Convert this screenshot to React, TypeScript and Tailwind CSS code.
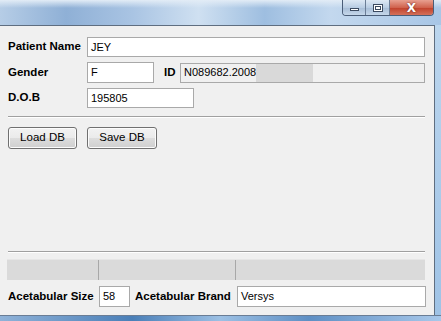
import React from "react";

const font = { fontFamily: "'Liberation Sans', Arial, sans-serif" };

function Input({ w, value, gray, h = 20 }: { w: number; value: string; gray?: boolean; h?: number }) {
  return (
    <div
      className={`flex shrink-0 items-center whitespace-nowrap border border-[#a9a9a9] pl-[3px] text-[11px] text-black ${gray ? "bg-[#f0f0f0]" : "bg-white"}`}
      style={{ width: w, height: h }}
    >
      {value}
    </div>
  );
}

function Btn({ label, w }: { label: string; w: number }) {
  return (
    <div
      className="flex h-[22px] items-center justify-center rounded-[3px] border border-[#707070] bg-[linear-gradient(#f2f2f2_0%,#ebebeb_48%,#dddddd_52%,#cfcfcf_100%)] text-[11.5px] text-black shadow-[inset_0_0_0_1px_#fcfcfc]"
      style={{ width: w }}
    >
      {label}
    </div>
  );
}

export default function App() {
  return (
    <div className="relative flex h-[321px] w-[441px] flex-col overflow-hidden bg-[#bcd3ea]" style={font}>
      {/* title bar */}
      <div className="relative h-[25px] w-full bg-[linear-gradient(90deg,#b6cde6_0%,#8fb0d6_15%,#a9c4e3_30%,#cfe0f1_45%,#9ebee0_60%,#c3d8ee_75%,#a8c6e6_100%)]">
        <div className="absolute inset-x-0 top-0 h-[8px] bg-[linear-gradient(#e2ecf6,rgba(226,236,246,0))]" />
        <div className="absolute right-[7px] top-0 flex h-[16px] overflow-hidden rounded-b-[4px] border border-t-0 border-[#4a5d78]">
          <div className="flex w-[23px] items-center justify-center border-r border-[#6b7d96] bg-[linear-gradient(#dde8f4,#b9cde3_50%,#a6bcd6_51%,#c5d7ea)]">
            <div className="mt-[3px] h-[3px] w-[9px] border border-[#3b4a60] bg-white" />
          </div>
          <div className="flex w-[24px] items-center justify-center border-r border-[#6b7d96] bg-[linear-gradient(#dde8f4,#b9cde3_50%,#a6bcd6_51%,#c5d7ea)]">
            <div className="h-[8px] w-[10px] border border-[#3b4a60] bg-white p-[1px]">
              <div className="h-full w-full border border-[#3b4a60]" />
            </div>
          </div>
          <div className="flex w-[43px] items-center justify-center bg-[linear-gradient(#e8a090,#d0634e_50%,#c0402a_51%,#d4705a)] text-[12px] font-bold leading-none text-white" style={{ fontFamily: "'DejaVu Sans', sans-serif", textShadow: "0 0 2px #5a1a10" }}>
            X
          </div>
        </div>
      </div>

      <div className="flex flex-1">
        {/* window content */}
        <div className="flex w-[435px] flex-col border-r border-t border-[#5f6e80] bg-[#f0f0f0] pl-[8px] text-[11.5px] text-black">
          <div className="mt-[11px] flex items-center">
            <div className="w-[79px] shrink-0 whitespace-nowrap font-bold">Patient Name</div>
            <Input w={338} value="JEY" />
          </div>
          <div className="mt-[5px] flex items-center">
            <div className="w-[79px] shrink-0 whitespace-nowrap font-bold">Gender</div>
            <Input w={67} value="F" h={21} />
            <div className="ml-[10px] w-[16px] shrink-0 font-bold">ID</div>
            <div className="relative">
              <Input w={245} value="N089682.2008" gray />
              <div className="absolute left-[76px] top-[1px] h-[18px] w-[57px] bg-[#d9d9d9]" />
            </div>
          </div>
          <div className="mt-[5px] flex items-center">
            <div className="w-[79px] shrink-0 whitespace-nowrap font-bold">D.O.B</div>
            <Input w={107} value="195805" />
          </div>
          <div className="mt-[8px] h-[1px] w-[417px] bg-[#a0a0a0] shadow-[0_1px_0_#ffffff]" />
          <div className="mt-[10px] flex gap-[10px]">
            <Btn label="Load DB" w={69} />
            <Btn label="Save DB" w={70} />
          </div>
          <div className="mt-[102px] h-[1px] w-[417px] bg-[#a0a0a0] shadow-[0_1px_0_#ffffff]" />
          <div className="-ml-[1px] mt-[7px] flex h-[21px] w-[418px] border-t border-[#e6e6e6] bg-[#dadada]">
            <div className="w-[92px] border-r border-[#a8a8a8]" />
            <div className="w-[137px] border-r border-[#a8a8a8]" />
            <div className="flex-1" />
          </div>
          <div className="mt-[6px] flex items-center">
            <div className="w-[91px] shrink-0 whitespace-nowrap font-bold">Acetabular Size</div>
            <Input w={31} value="58" h={21} />
            <div className="ml-[5px] w-[102px] shrink-0 whitespace-nowrap font-bold">Acetabular Brand</div>
            <Input w={189} value="Versys" h={21} />
          </div>
        </div>
        {/* right frame */}
        <div className="flex-1 bg-[linear-gradient(#bcd6ee,#9fc3e6)]" />
      </div>
      {/* bottom frame */}
      <div className="h-[6px] w-full border-t border-[#6a7d95] bg-[linear-gradient(90deg,#8fb2d8,#4a7fb8_30%,#9cc0e4_50%,#5e8fc4_70%,#a8c8ea)]" />
    </div>
  );
}
